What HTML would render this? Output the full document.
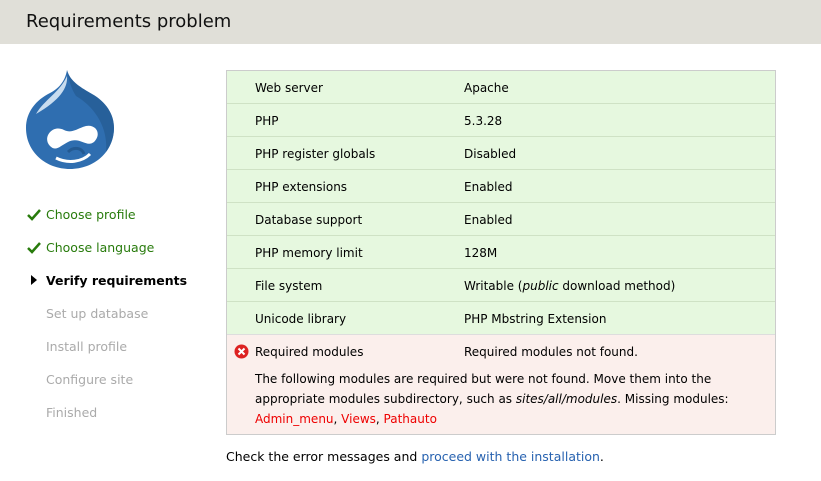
<!DOCTYPE html>
<html><head><style>
body{margin:0;width:821px;height:481px;background:#fff;font-family:"DejaVu Sans","Liberation Sans",sans-serif;font-size:12px;color:#000;overflow:hidden;position:relative}
.hdr{position:absolute;left:0;top:0;width:821px;height:44px;background:#e0dfd8}
.hdr h1{margin:0;position:absolute;left:26px;top:11px;font-size:18px;font-weight:normal;color:#111}
.side{position:absolute;left:0;top:0}
.side div{position:absolute;left:46px;font-size:12.5px;white-space:nowrap}
.done{color:#287b0c}.cur{font-weight:bold;color:#000}.todo{color:#aaa}
.tbl{position:absolute;left:226px;top:70px;width:548px;border:1px solid #ccc;background:#e6f8df}
.row{height:32px;border-bottom:1px solid #cfe2c5;position:relative}
.row span{position:absolute;top:10px}
.a{left:28px}.b{left:237px}
.err{background:#fbefec;height:99px;position:relative}
.red{color:#e00}
</style></head><body>
<div class="hdr"><h1>Requirements problem</h1></div>
<svg style="position:absolute;left:24px;top:68px" width="92" height="104" viewBox="0 0 92 104">
<path d="M43 2 C46 14 58 20 68 26 C82 34 90 46 90 60 C90 84 70 101 46 101 C22 101 2 84 2 60 C2 44 12 32 26 25 C34 21 41 14 43 2Z" fill="#2f6eb0"/>
<path d="M43 2 C46 14 58 20 68 26 C82 34 90 46 90 60 C90 70 86 78 82 84 C84 60 72 40 52 28 C48 22 45 14 43 2Z" fill="#245a92" opacity=".7"/>
<path d="M12 46 C20 32 36 24 43 8 C44 20 36 32 12 46Z" fill="#c8dcef"/>
<path d="M26 78 C18 70 28 56 40 62 C48 66 54 60 62 58 C72 56 78 66 70 74 C62 80 56 68 44 74 C36 78 32 84 26 78Z" fill="#fff"/>
<path d="M32 90 C44 96 58 94 66 86" stroke="#fff" stroke-width="3" fill="none"/>
<path d="M44 84 C50 78 58 80 60 86" stroke="#245a92" stroke-width="3" fill="none"/>
</svg>
<div class="side">
<svg style="position:absolute;left:27px;top:208px" width="14" height="14"><path d="M1 7 L5 11 L13 2" stroke="#287b0c" stroke-width="2.5" fill="none"/></svg>
<div class="done" style="top:207px">Choose profile</div>
<svg style="position:absolute;left:27px;top:241px" width="14" height="14"><path d="M1 7 L5 11 L13 2" stroke="#287b0c" stroke-width="2.5" fill="none"/></svg>
<div class="done" style="top:240px">Choose language</div>
<svg style="position:absolute;left:31px;top:275px" width="8" height="10"><path d="M0 0 L6 5 L0 10Z" fill="#000"/></svg>
<div class="cur" style="top:273px">Verify requirements</div>
<div class="todo" style="top:306px">Set up database</div>
<div class="todo" style="top:339px">Install profile</div>
<div class="todo" style="top:372px">Configure site</div>
<div class="todo" style="top:405px">Finished</div>
</div>
<div class="tbl">
<div class="row"><span class="a">Web server</span><span class="b">Apache</span></div>
<div class="row"><span class="a">PHP</span><span class="b">5.3.28</span></div>
<div class="row"><span class="a">PHP register globals</span><span class="b">Disabled</span></div>
<div class="row"><span class="a">PHP extensions</span><span class="b">Enabled</span></div>
<div class="row"><span class="a">Database support</span><span class="b">Enabled</span></div>
<div class="row"><span class="a">PHP memory limit</span><span class="b">128M</span></div>
<div class="row"><span class="a">File system</span><span class="b">Writable (<i>public</i> download method)</span></div>
<div class="row" style="border-bottom:1px solid #ddd"><span class="a">Unicode library</span><span class="b">PHP Mbstring Extension</span></div>
<div class="err">
<svg style="position:absolute;left:7px;top:9px" width="15" height="15"><circle cx="7.5" cy="7.5" r="7" fill="#d22"/><path d="M4.5 4.5 L10.5 10.5 M10.5 4.5 L4.5 10.5" stroke="#fff" stroke-width="2"/></svg>
<span style="position:absolute;left:28px;top:10px">Required modules</span>
<span style="position:absolute;left:237px;top:10px">Required modules not found.</span>
<div style="position:absolute;left:28px;top:34px;width:500px;line-height:20px">The following modules are required but were not found. Move them into the appropriate modules subdirectory, such as <i>sites/all/modules</i>. Missing modules: <span class="red">Admin_menu</span>, <span class="red">Views</span>, <span class="red">Pathauto</span></div>
</div>
</div>
<div style="position:absolute;left:226px;top:449px;font-size:12.5px">Check the error messages and <span style="color:#2762b0">proceed with the installation</span>.</div>
</body></html>
